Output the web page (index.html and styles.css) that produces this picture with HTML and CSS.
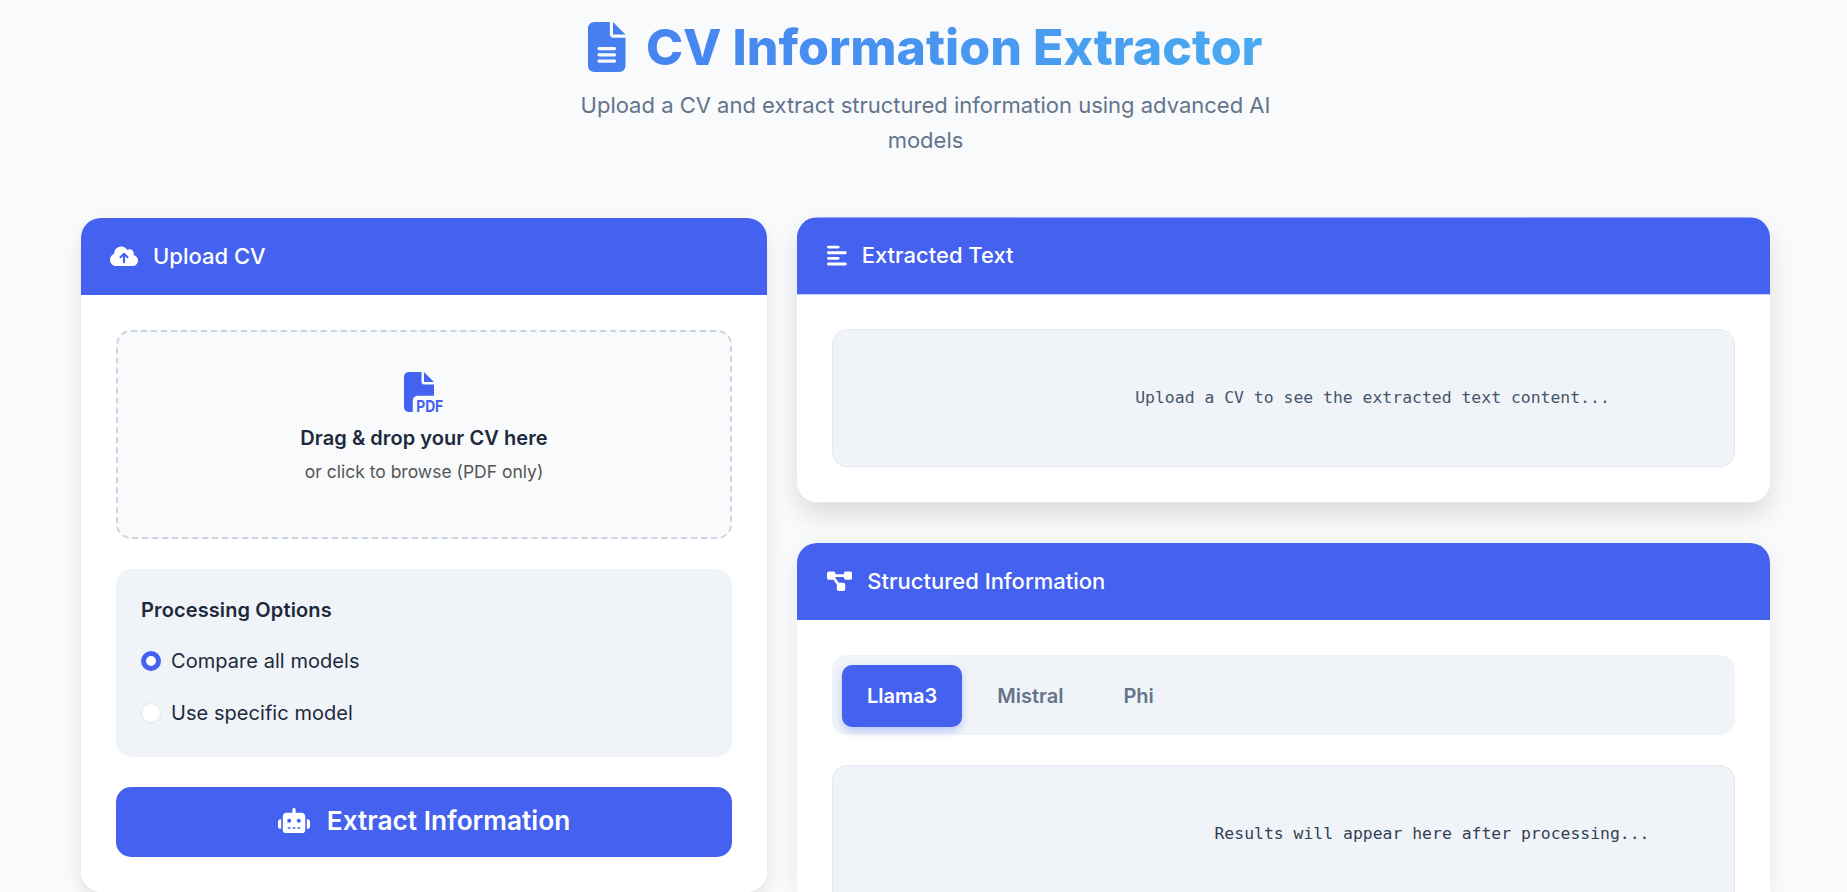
FILE: index.html
```html
<!DOCTYPE html>
<html lang="en">
<head>
<meta charset="utf-8">
<title>CV Information Extractor</title>
<link rel="stylesheet" href="styles.css">
</head>
<body>
<header class="hero">
  <h1 class="title">
    <svg class="title-icon" viewBox="0 0 384 512"><path d="M64 0C28.700 0 0 28.700 0 64V448c0 35.300 28.700 64 64 64H320c35.300 0 64-28.700 64-64V160H256c-17.700 0-32-14.300-32-32V0H64zM256 0V128H384L256 0zM112 256H272c8.800 0 16 7.200 16 16s-7.200 16-16 16H112c-8.800 0-16-7.200-16-16s7.200-16 16-16zm0 64H272c8.800 0 16 7.200 16 16s-7.200 16-16 16H112c-8.800 0-16-7.200-16-16s7.200-16 16-16zm0 64H272c8.800 0 16 7.200 16 16s-7.200 16-16 16H112c-8.800 0-16-7.200-16-16s7.200-16 16-16z"/></svg>
    <span class="title-text">CV Information Extractor</span>
  </h1>
  <p class="subtitle">Upload a CV and extract structured information using advanced AI models</p>
</header>
<main class="layout">
  <section class="card card-upload">
    <h2 class="card-header">
      <svg class="icon icon-640" viewBox="0 0 640 512"><path d="M144 480C64.500 480 0 415.500 0 336c0-62.800 40.200-116.200 96.200-135.900c-.1-2.700-.2-5.400-.2-8.100c0-88.400 71.600-160 160-160c59.300 0 111 32.200 138.700 80.200C409.900 102 428.300 96 448 96c53 0 96 43 96 96c0 12.200-2.300 23.800-6.400 34.600C596 238.400 640 290.100 640 352c0 70.700-57.300 128-128 128H144zm79-217c-9.400 9.400-9.400 24.600 0 33.900s24.600 9.400 33.900 0l39-39V392c0 13.300 10.700 24 24 24s24-10.700 24-24V257.900l39 39c9.400 9.400 24.600 9.400 33.900 0s9.400-24.600 0-33.900l-80-80c-9.400-9.400-24.600-9.400-33.900 0l-80 80z"/></svg>
      Upload CV
    </h2>
    <div class="card-body">
      <div class="dropzone">
        <svg class="pdf-icon" viewBox="0 0 512 512"><path d="M0 64C0 28.700 28.700 0 64 0H224V128c0 17.700 14.300 32 32 32H384V304H176c-35.300 0-64 28.700-64 64V512H64c-35.300 0-64-28.700-64-64V64zm384 64H256V0L384 128z"/><text class="pdf-label" x="156" y="509" textLength="346" lengthAdjust="spacingAndGlyphs">PDF</text></svg>
        <p class="drop-title">Drag &amp; drop your CV here</p>
        <p class="drop-hint">or click to browse (PDF only)</p>
      </div>
      <div class="options">
        <h3 class="options-title">Processing Options</h3>
        <label class="option"><span class="radio radio-on"></span>Compare all models</label>
        <label class="option"><span class="radio"></span>Use specific model</label>
      </div>
      <button class="extract">
        <svg class="robot" viewBox="0 0 640 512"><path d="M320 0c17.700 0 32 14.300 32 32V96H472c39.800 0 72 32.200 72 72V440c0 39.800-32.200 72-72 72H168c-39.800 0-72-32.200-72-72V168c0-39.800 32.200-72 72-72H288V32c0-17.700 14.300-32 32-32zM208 384c-8.800 0-16 7.200-16 16s7.200 16 16 16h32c8.800 0 16-7.200 16-16s-7.200-16-16-16H208zm96 0c-8.800 0-16 7.200-16 16s7.200 16 16 16h32c8.800 0 16-7.200 16-16s-7.200-16-16-16H304zm96 0c-8.800 0-16 7.200-16 16s7.200 16 16 16h32c8.800 0 16-7.200 16-16s-7.200-16-16-16H400zM264 256a40 40 0 1 0-80 0a40 40 0 1 0 80 0zm152 40a40 40 0 1 0 0-80a40 40 0 1 0 0 80zM48 224H64V416H48c-26.500 0-48-21.500-48-48V272c0-26.500 21.500-48 48-48zm544 0c26.500 0 48 21.500 48 48v96c0 26.500-21.500 48-48 48H576V224h16z"/></svg>
        Extract Information
      </button>
    </div>
  </section>
  <div class="results">
    <section class="card card-raised">
      <h2 class="card-header">
        <svg class="icon icon-448" viewBox="0 0 448 512"><path d="M288 64c0 17.700-14.300 32-32 32H32C14.300 96 0 81.700 0 64S14.300 32 32 32H256c17.700 0 32 14.300 32 32zm0 256c0 17.700-14.300 32-32 32H32c-17.700 0-32-14.300-32-32s14.300-32 32-32H256c17.700 0 32 14.300 32 32zM0 192c0-17.700 14.300-32 32-32H416c17.700 0 32 14.300 32 32s-14.300 32-32 32H32c-17.700 0-32-14.300-32-32zM448 448c0 17.700-14.300 32-32 32H32c-17.700 0-32-14.300-32-32s14.300-32 32-32H416c17.700 0 32 14.300 32 32z"/></svg>
        Extracted Text
      </h2>
      <div class="card-body">
        <div class="output output-text">Upload a CV to see the extracted text content...</div>
      </div>
    </section>
    <section class="card card-structured">
      <h2 class="card-header">
        <svg class="icon icon-576" viewBox="0 0 576 512"><path d="M0 80C0 53.500 21.500 32 48 32h96c26.500 0 48 21.500 48 48V96H384V80c0-26.500 21.500-48 48-48h96c26.500 0 48 21.500 48 48v96c0 26.500-21.500 48-48 48H432c-26.500 0-48-21.500-48-48V160H192v16c0 1.700-.1 3.400-.3 5L272 288h96c26.500 0 48 21.500 48 48v96c0 26.500-21.500 48-48 48H272c-26.500 0-48-21.500-48-48V336c0-1.700 .1-3.400 .3-5L144 224H48c-26.500 0-48-21.500-48-48V80z"/></svg>
        Structured Information
      </h2>
      <div class="card-body">
        <nav class="tabs">
          <button class="tab tab-active">Llama3</button>
          <button class="tab">Mistral</button>
          <button class="tab">Phi</button>
        </nav>
        <div class="output output-result">Results will appear here after processing...</div>
      </div>
    </section>
  </div>
</main>
</body>
</html>
```

FILE: styles.css
```css
* { box-sizing: border-box; margin: 0; padding: 0; }
html, body { height: 892px; overflow: hidden; }
body {
  background: #f8fafc;
  color: #1e293b;
  font-family: Inter, "Liberation Sans", sans-serif;
}
button { border: 0; font-family: inherit; }

.hero { height: 218px; display: flex; flex-direction: column; align-items: center; padding-top: 17px; padding-left: 4px; }
.title { display: flex; align-items: center; gap: 20px; height: 60px; font-size: 50px; font-weight: 800; line-height: 60px; }
.title-icon { width: 37.5px; height: 50px; fill: #4680f0; }
.title-text { background: linear-gradient(90deg, #4684f0, #4aa9f0); background-clip: text; -webkit-background-clip: text; color: transparent; }
.subtitle { width: 750px; margin-top: 11px; text-align: center; font-size: 22px; line-height: 35px; color: #64748b; }

.layout { display: grid; grid-template-columns: 686px 973px; grid-template-rows: 674px; gap: 30px; height: 674px; padding-left: 81px; align-items: start; }
.card { background: #fff; border-radius: 20px; box-shadow: 0 5px 25px rgba(0, 0, 0, .07); overflow: hidden; }
.card-upload { height: 674px; box-shadow: 0 10px 18px -4px rgba(0, 0, 0, .1), 0 5px 25px rgba(0, 0, 0, .04); }
.card-raised { height: 285px; flex: none; box-shadow: 0 12px 25px rgba(0, 0, 0, .12); transform: translateY(-.7px); }
.card-structured { flex: 1; min-height: 0; border-radius: 20px 20px 0 0; }
.results { display: flex; flex-direction: column; gap: 40px; height: 674px; }
.card-header { display: flex; align-items: center; gap: 15px; height: 77px; padding: 0 30px 1px; background: #4461f0; color: #fff; font-size: 22px; font-weight: 500; }
.card-upload .card-header { padding-left: 29px; }
.icon { height: 22.5px; fill: currentColor; flex: none; }
.icon-640 { width: 28px; }
.icon-448 { width: 19.7px; }
.icon-576 { width: 25.3px; }
.card-body { padding: 35px; }

.dropzone { height: 209px; border: 2px dashed #cbd5e1; border-radius: 15px; background: #f8fafc; display: flex; flex-direction: column; align-items: center; padding-top: 40px; }
.pdf-icon { width: 40px; height: 40px; fill: #4461f0; overflow: visible; }
.pdf-label { font: 700 212px Inter, sans-serif; }
.drop-title { margin-top: 11px; font-size: 20px; font-weight: 600; line-height: 30px; letter-spacing: .07px; }
.drop-hint { margin-top: 4px; font-size: 17.500px; line-height: 30px; color: #555; }

.options { height: 188px; margin-top: 30px; padding: 25px; border-radius: 15px; background: #f0f4f9; }
.options-title { font-size: 20px; font-weight: 600; line-height: 32px; letter-spacing: .12px; }
.option { display: flex; align-items: center; gap: 10px; height: 32px; margin-top: 20px; font-size: 20px; letter-spacing: .05px; }
.options-title + .option { margin-top: 19px; }
.radio { width: 20px; height: 20px; border: 1px solid #e2e8f0; border-radius: 50%; background: #fff; }
.radio-on { border: 5px solid #4461f0; }

.extract { display: flex; align-items: center; justify-content: center; gap: 17px; width: 100%; height: 70px; margin-top: 30px; padding-bottom: 3px; border-radius: 15px; background: #4461f0; color: #fff; font-size: 26.250px; font-weight: 600; }
.robot { width: 32px; height: 25.600px; fill: currentColor; }

.output { border: 1px solid #e2e8f0; border-radius: 15px; background: #f0f4f9; color: #475569; text-align: center; font-family: "DejaVu Sans Mono", "Liberation Mono", monospace; font-size: 16.430px; line-height: 28px; padding-top: 54px; }
.output-text { height: 138px; padding-left: 178px; }
.output-result { height: 250px; margin-top: 30px; padding-left: 297px; color: #334155; }

.tabs { display: flex; gap: 10px; height: 80px; padding: 10px; border-radius: 15px; background: #f0f4f9; }
.tab { height: 62px; padding: 0 25px; border-radius: 10px; background: transparent; color: #64748b; font-size: 20px; font-weight: 600; }
.tab-active { background: #4461f0; color: #fff; box-shadow: 0 4px 8px rgba(67, 97, 238, .3); }
```
